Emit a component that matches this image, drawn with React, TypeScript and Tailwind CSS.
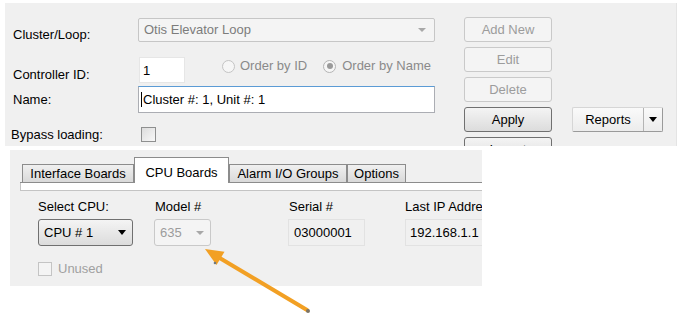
import React from "react";

const font = { fontFamily: '"Liberation Sans", Arial, sans-serif' };

function SideButton({ label, enabled = false }: { label: string; enabled?: boolean }) {
  return (
    <div
      className={
        enabled
          ? "flex h-[25px] w-[88px] shrink-0 items-center justify-center rounded-[3px] border border-[#707070] bg-gradient-to-b from-[#f4f4f4] to-[#dcdcdc] text-[13px] text-black"
          : "flex h-[25px] w-[88px] shrink-0 items-center justify-center rounded-[3px] border border-[#c9c9c9] bg-[#f4f4f4] text-[13px] text-[#9c9c9c]"
      }
    >
      {label}
    </div>
  );
}

function Tab({ label, w, active = false }: { label: string; w: string; active?: boolean }) {
  return (
    <div
      className={
        active
          ? `-mb-px flex h-[26px] ${w} shrink-0 items-start justify-center border border-b-0 border-[#8c8c8c] bg-white pt-[5px] text-[13px] text-black`
          : `flex h-[18px] ${w} shrink-0 items-center justify-center border border-b-0 border-[#8c8c8c] bg-gradient-to-b from-[#f0f0f0] to-[#d9d9d9] text-[13px] text-black`
      }
    >
      {label}
    </div>
  );
}

export default function App() {
  return (
    <div className="relative h-[317px] w-[687px] overflow-hidden bg-white" style={font}>
      {/* top form */}
      <div className="ml-[5px] mt-[3px] flex h-[143px] w-[672px] overflow-hidden border-r border-[#e4e4e4] bg-[#f0f0f0]">
        <div className="flex w-[430px] shrink-0 flex-col pl-[8px] pt-[15px]">
          <div className="flex h-[24px] shrink-0">
            <div className="w-[125px] shrink-0 pt-[9px] text-[13px] leading-4 text-black">Cluster/Loop:</div>
            <div className="flex h-[24px] w-[297px] shrink-0 items-center justify-between rounded-[2px] border border-[#c6c6c6] bg-[#f4f4f4] pl-[5px] pr-[8px] text-[13px] text-[#7c7c7c]">
              <span>Otis Elevator Loop</span>
              <span className="h-0 w-0 border-x-[4px] border-t-[4px] border-x-transparent border-t-[#a8a8a8]" />
            </div>
          </div>

          <div className="mt-[15px] flex h-[26px] shrink-0">
            <div className="w-[126px] shrink-0 pt-[10px] text-[13px] leading-4 text-black">Controller ID:</div>
            <div className="flex h-[26px] w-[46px] shrink-0 items-start border border-[#e6e6e6] bg-white pl-[3px] pt-[3px] text-[13px] text-black">
              1
            </div>
            <div className="flex h-[18px] items-center whitespace-nowrap text-[13px] text-[#8a8a8a]">
              <span className="ml-[37px] h-[13px] w-[13px] shrink-0 rounded-full border border-[#c4c4c4] bg-[#f6f6f6]" />
              <span className="ml-[5px]">Order by ID</span>
              <span className="ml-[16px] flex h-[13px] w-[13px] shrink-0 items-center justify-center rounded-full border border-[#b4b4b4] bg-[#f6f6f6]">
                <span className="h-[6px] w-[6px] rounded-full bg-[#9a9a9a]" />
              </span>
              <span className="ml-[6px]">Order by Name</span>
            </div>
          </div>

          <div className="mt-[3px] flex h-[27px] shrink-0">
            <div className="w-[125px] shrink-0 pt-[6px] text-[13px] leading-4 text-black">Name:</div>
            <div className="flex h-[27px] w-[297px] shrink-0 items-center border border-[#abadb3] border-t-[#5b9bd5] bg-white pl-[2px] text-[13px] text-black">
              <span className="mr-px h-[15px] w-px bg-black" />
              Cluster #: 1, Unit #: 1
            </div>
          </div>

          <div className="mt-[14px] flex h-[16px] shrink-0 -ml-[2px]">
            <div className="w-[130px] shrink-0 text-[13px] leading-4 text-black">Bypass loading:</div>
            <div className="h-[15px] w-[15px] shrink-0 border border-[#8e8f8f] bg-gradient-to-br from-[#dcdcdc] to-[#f8f8f8]" />
          </div>
        </div>

        <div className="ml-[29px] flex shrink-0 flex-col gap-[5px] pt-[14px]">
          <SideButton label="Add New" />
          <SideButton label="Edit" />
          <SideButton label="Delete" />
          <SideButton label="Apply" enabled />
          <SideButton label="Import" enabled />
        </div>

        <div className="ml-[20px] shrink-0 pt-[104px]">
          <div className="flex h-[25px] w-[91px] rounded-[2px] border border-[#d6d6d6] border-b-[#9a9a9a] border-r-[#9a9a9a] bg-gradient-to-b from-[#fafafa] to-[#ececec] text-[13px] text-black">
            <div className="flex w-[70px] items-center justify-center">Reports</div>
            <div className="flex flex-1 items-center justify-center border-l border-[#b4b4b4]">
              <span className="h-0 w-0 border-x-[4px] border-t-[5px] border-x-transparent border-t-black" />
            </div>
          </div>
        </div>
      </div>

      {/* CPU boards panel */}
      <div className="ml-[10px] mt-[4px] h-[136px] w-[472px] overflow-hidden bg-[#f0f0f0]">
        <div className="pl-[10px] pt-[8px]">
          <div className="flex h-[25px] items-end border-b border-[#8c8c8c]">
            <div className="ml-[2px]" />
            <Tab label="Interface Boards" w="w-[112px]" />
            <Tab label="CPU Boards" w="w-[95px]" active />
            <Tab label="Alarm I/O Groups" w="w-[118px]" />
            <Tab label="Options" w="w-[59px]" />
          </div>
          <div className="h-[8px] border-b border-l border-[#c4c4c4] bg-white" />
        </div>

        <div className="flex pl-[28px] pt-[8px] text-[13px] leading-4 text-black">
          <div className="w-[116px] shrink-0">
            <div>Select CPU:</div>
            <div className="mt-[4px] flex h-[27px] w-[95px] items-center justify-between rounded-[3px] border border-[#707070] bg-gradient-to-b from-[#f4f4f4] to-[#dcdcdc] pl-[5px] pr-[6px]">
              <span>CPU # 1</span>
              <span className="h-0 w-0 border-x-[4px] border-t-[5px] border-x-transparent border-t-black" />
            </div>
            <div className="mt-[15px] flex items-center text-[#a0a0a0]">
              <span className="h-[14px] w-[14px] border border-[#c4c4c4] bg-[#f4f4f4]" />
              <span className="ml-[6px]">Unused</span>
            </div>
          </div>
          <div className="w-[134px] shrink-0">
            <div className="pl-px">Model #</div>
            <div className="mt-[4px] flex h-[27px] w-[57px] items-center justify-between rounded-[3px] border border-[#c9c9c9] bg-[#f4f4f4] pl-[5px] pr-[6px] text-[#9c9c9c]">
              <span>635</span>
              <span className="h-0 w-0 border-x-[4px] border-t-[4px] border-x-transparent border-t-[#a8a8a8]" />
            </div>
          </div>
          <div className="w-[117px] shrink-0">
            <div className="pl-px">Serial #</div>
            <div className="mt-[4px] flex h-[27px] w-[77px] items-center border border-[#e2e2e2] pl-[5px]">
              03000001
            </div>
          </div>
          <div className="shrink-0 whitespace-nowrap">
            <div>Last IP Address</div>
            <div className="mt-[4px] flex h-[27px] w-[90px] items-center border border-[#e2e2e2] pl-[4px]">
              192.168.1.1
            </div>
          </div>
        </div>
      </div>

      {/* annotation arrow */}
      <svg className="pointer-events-none absolute left-0 top-0" width="687" height="317" viewBox="0 0 687 317">
        <line x1="307" y1="310" x2="218" y2="257" stroke="#f2a024" strokeWidth="4" strokeLinecap="round" />
        <polygon points="205,249 224.5,251.8 216.5,265" fill="#f2a024" />
        <circle cx="308" cy="311" r="2" fill="#7c7466" />
        <circle cx="215" cy="263" r="1.3" fill="#6f7a80" />
      </svg>
    </div>
  );
}
